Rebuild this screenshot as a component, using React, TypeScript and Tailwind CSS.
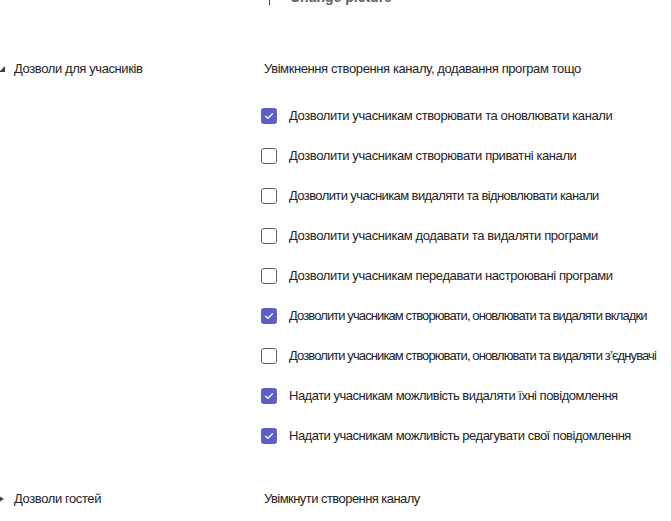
import React from "react";

interface Permission {
  label: string;
  checked: boolean;
  tight?: string;
}

const memberPermissions: Permission[] = [
  { label: "Дозволити учасникам створювати та оновлювати канали", checked: true },
  { label: "Дозволити учасникам створювати приватні канали", checked: false },
  { label: "Дозволити учасникам видаляти та відновлювати канали", checked: false, tight: "tracking-[-0.6px]" },
  { label: "Дозволити учасникам додавати та видаляти програми", checked: false },
  { label: "Дозволити учасникам передавати настроювані програми", checked: false },
  { label: "Дозволити учасникам створювати, оновлювати та видаляти вкладки", checked: true, tight: "tracking-[-0.9px]" },
  { label: "Дозволити учасникам створювати, оновлювати та видаляти з’єднувачі", checked: false, tight: "tracking-[-0.9px]" },
  { label: "Надати учасникам можливість видаляти їхні повідомлення", checked: true, tight: "tracking-[-0.5px]" },
  { label: "Надати учасникам можливість редагувати свої повідомлення", checked: true, tight: "tracking-[-0.5px]" },
];

const Checkbox: React.FC<{ checked: boolean }> = ({ checked }) =>
  checked ? (
    <span className="flex h-4 w-4 shrink-0 items-center justify-center rounded-[3px] bg-[#5b5fc7]">
      <svg width="10" height="8" viewBox="0 0 10 8" fill="none">
        <path d="M1.5 4.2 L3.9 6.3 L8.5 1.7" stroke="white" strokeWidth="1.3" strokeLinecap="round" strokeLinejoin="round" />
      </svg>
    </span>
  ) : (
    <span className="h-4 w-4 shrink-0 rounded-[3px] border border-[#616161] bg-white" />
  );

const Caret: React.FC<{ open: boolean }> = ({ open }) => (
  <svg width="6" height="6" viewBox="0 0 6 6" className="shrink-0">
    {open ? <path d="M6 0 L6 6 L0 6 Z" fill="#424242" /> : <path d="M0 0 L5 3 L0 6 Z" fill="#424242" />}
  </svg>
);

const SectionRow: React.FC<{
  title: string;
  heading: string;
  headingTight?: string;
  open: boolean;
  children?: React.ReactNode;
}> = ({ title, heading, headingTight = "tracking-[-0.4px]", open, children }) => (
  <div className="flex">
    <div className="flex h-5 w-[264px] shrink-0 items-center">
      <div className="-ml-[1px] flex w-[15px] items-center">
        <Caret open={open} />
      </div>
      <span className="text-[13px] tracking-[-0.4px] text-[#242424]">{title}</span>
    </div>
    <div className="flex flex-col">
      <div className={`flex h-5 items-center text-[13px] text-[#242424] ${headingTight}`}>{heading}</div>
      {children}
    </div>
  </div>
);

export default function App() {
  return (
    <div
      className="relative h-[521px] w-[671px] overflow-hidden bg-white"
      style={{ fontFamily: '"Liberation Sans", "Noto Sans", sans-serif' }}
    >
      <div className="-mt-[11px] flex h-4 items-center pl-[269px]">
        <span className="h-4 w-px bg-[#424242]" />
        <span className="ml-5 text-[14px] font-semibold text-[#616161]">Change picture</span>
      </div>

      <div className="mt-[54px]">
        <SectionRow title="Дозволи для учасників" heading="Увімкнення створення каналу, додавання програм тощо" open>
          <div className="mt-[17px] flex flex-col">
            {memberPermissions.map((p) => (
              <div key={p.label} className="flex h-10 items-center -ml-[3px]">
                <Checkbox checked={p.checked} />
                <span className={`ml-3 whitespace-nowrap text-[13px] text-[#242424] ${p.tight ?? "tracking-[-0.4px]"}`}>
                  {p.label}
                </span>
              </div>
            ))}
          </div>
        </SectionRow>
      </div>

      <div className="mt-[33px]">
        <SectionRow
          title="Дозволи гостей"
          heading="Увімкнути створення каналу"
          headingTight="tracking-[-0.55px]"
          open={false}
        />
      </div>
    </div>
  );
}
